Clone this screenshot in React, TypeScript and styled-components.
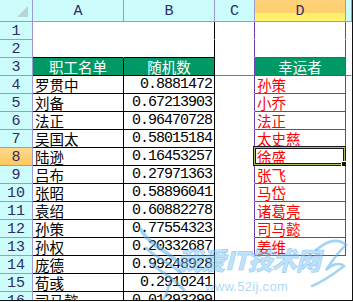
import React from "react";
import styled, { createGlobalStyle, css } from "styled-components";

const Global = createGlobalStyle`
  html, body { margin: 0; padding: 0; background: #fff; }
  #root { width: 353px; height: 302px; }
`;

const CJK = `"Noto Sans CJK SC", "Noto Sans", sans-serif`;
const MONO = `"Liberation Mono", "DejaVu Sans Mono", monospace`;

const Sheet = styled.div`
  position: relative;
  width: 352px;
  height: 300px;
  border-right: 1px solid #111;
  border-bottom: 1px solid #111;
  overflow: hidden;
  display: grid;
  grid-template-columns: 33px 91px 91px 40px 91px 6px;
  grid-template-rows: 22px;
  grid-auto-rows: 18px;
  background: #fff;
`;

const Cell = styled.div<{
  $bg?: string;
  $color?: string;
  $align?: "left" | "right" | "center";
  $r?: string;
  $b?: string;
  $mono?: boolean;
}>`
  position: relative;
  box-sizing: border-box;
  border-right: 1px solid ${(p) => p.$r || "transparent"};
  border-bottom: 1px solid ${(p) => p.$b || "transparent"};
  background: ${(p) => p.$bg || "#fff"};
  color: ${(p) => p.$color || "#000"};
  display: flex;
  align-items: flex-end;
  justify-content: ${(p) =>
    p.$align === "right" ? "flex-end" : p.$align === "center" ? "center" : "flex-start"};
  padding: 0 2px 0 2px;
  white-space: nowrap;
  overflow: visible;
  ${(p) =>
    p.$mono
      ? css`
          font-family: ${MONO};
          font-size: 15px;
          letter-spacing: -1px;
          line-height: 17px;
        `
      : css`
          font-family: ${CJK};
          font-size: 14.5px;
          line-height: 17px;
        `}
`;

const HeadCell = styled.div<{ $sel?: boolean; $row?: boolean }>`
  position: relative;
  box-sizing: border-box;
  border-right: 1px solid #9a9ad0;
  border-bottom: 1px solid #9a9ad0;
  background: ${(p) =>
    p.$sel
      ? p.$row
        ? "linear-gradient(#ffd88c, #ffc75e)"
        : "linear-gradient(#ffd27a 0%, #ffcf6e 62%, #fff06a 63%, #fff26e 100%)"
      : "#ccfcfc"};
  color: #2d2d66;
  font-family: ${MONO};
  font-size: 15px;
  display: flex;
  align-items: center;
  justify-content: center;
  padding-top: 1px;
`;

const Corner = styled(HeadCell)`
  &::after {
    content: "";
    position: absolute;
    right: 4px;
    bottom: 4px;
    width: 0;
    height: 0;
    border-left: 11px solid transparent;
    border-bottom: 11px solid #b8d4d4;
  }
`;

const Selection = styled.div`
  position: absolute;
  left: -2px;
  top: -2px;
  right: -1px;
  bottom: -1px;
  border: 1px solid #1a1a1a;
  box-shadow: inset 0 0 0 1px #a8c464, inset 0 0 0 2px #1a1a1a;
  pointer-events: none;
  &::after {
    content: "";
    position: absolute;
    right: -3px;
    bottom: -3px;
    width: 5px;
    height: 5px;
    background: #111;
    border: 1px solid #fff;
  }
`;

const Watermark = styled.div`
  position: absolute;
  left: 0;
  top: 0;
  width: 353px;
  height: 302px;
  pointer-events: none;
`;

const WmTitle = styled.div`
  position: absolute;
  left: 177px;
  top: 245px;
  font-family: ${CJK};
  font-weight: 900;
  font-style: italic;
  font-size: 25px;
  letter-spacing: -1px;
  color: rgba(125, 198, 245, 0.5);
  -webkit-text-stroke: 0.6px rgba(70, 160, 230, 0.45);
  line-height: 28px;
`;

const WmUrl = styled.div`
  position: absolute;
  left: 205px;
  top: 279px;
  font-family: "Liberation Sans", sans-serif;
  font-size: 13px;
  color: rgba(110, 190, 240, 0.6);
  letter-spacing: 0.3px;
`;

const GREEN = "#009966";
const PURPLE = "#7040a8";
const FREEZE = "#7a7a7a";

const names = ["罗贯中", "刘备", "法正", "吴国太", "陆逊", "吕布", "张昭", "袁绍", "孙策", "孙权", "庞德", "荀彧", "司马懿"];
const nums = ["0.8881472", "0.67213903", "0.96470728", "0.58015184", "0.16453257", "0.27971363", "0.58896041", "0.60882278", "0.77554323", "0.20332687", "0.99248928", "0.2910241", "0.01293299"];
const lucky = ["孙策", "小乔", "法正", "太史慈", "徐盛", "张飞", "马岱", "诸葛亮", "司马懿", "姜维"];

export default function App() {
  const rows: React.ReactNode[] = [];
  for (let r = 1; r <= 16; r++) {
    const sel = r === 8;
    rows.push(
      <HeadCell key={`h${r}`} $row $sel={sel}>
        {r}
      </HeadCell>
    );
    if (r <= 2) {
      const bottom = r === 2 ? "#000" : undefined;
      rows.push(<Cell key={`a${r}`} $b={bottom} />);
      rows.push(<Cell key={`b${r}`} $r="#000" $b={bottom} />);
      rows.push(<Cell key={`c${r}`} $r={PURPLE} />);
      rows.push(<Cell key={`d${r}`} $r={PURPLE} $b={r === 2 ? PURPLE : undefined} />);
      rows.push(<Cell key={`e${r}`} />);
    } else if (r === 3) {
      rows.push(
        <Cell key="a3" $bg={GREEN} $color="#fff" $align="center" $r="#000" $b="#000">
          职工名单
        </Cell>
      );
      rows.push(
        <Cell key="b3" $bg={GREEN} $color="#fff" $align="center" $r="#000" $b="#000">
          随机数
        </Cell>
      );
      rows.push(<Cell key="c3" $r={PURPLE} $b={FREEZE} />);
      rows.push(
        <Cell key="d3" $bg={GREEN} $color="#fff" $align="center" $r={PURPLE} $b={PURPLE}>
          幸运者
        </Cell>
      );
      rows.push(<Cell key="e3" $b={FREEZE} />);
    } else {
      const i = r - 4;
      const l = lucky[i];
      rows.push(
        <Cell key={`a${r}`} $r="#000" $b="#000">
          {names[i]}
        </Cell>
      );
      rows.push(
        <Cell key={`b${r}`} $align="right" $mono $r="#000" $b="#000">
          {nums[i]}
        </Cell>
      );
      rows.push(<Cell key={`c${r}`} $r={l ? PURPLE : undefined} />);
      rows.push(
        <Cell key={`d${r}`} $color="#ff0000" $r={l ? PURPLE : undefined} $b={l ? PURPLE : undefined}>
          {l}
          {sel && <Selection />}
        </Cell>
      );
      rows.push(<Cell key={`e${r}`} />);
    }
  }

  return (
    <>
      <Global />
      <Sheet>
        <Corner />
        <HeadCell>A</HeadCell>
        <HeadCell>B</HeadCell>
        <HeadCell>C</HeadCell>
        <HeadCell $sel>D</HeadCell>
        <HeadCell />
        {rows}
        <Watermark>
          <svg width="353" height="302" viewBox="0 0 353 302" style={{ position: "absolute", left: 0, top: 0 }}>
            <g fill="none" stroke="rgba(90,175,235,0.55)" strokeLinecap="round">
              <path d="M141 230 C150 245, 165 250, 178 262" strokeWidth="4" />
              <path d="M146 248 C156 258, 168 262, 180 272" strokeWidth="3" />
              <path d="M150 262 C160 272, 172 276, 184 290" strokeWidth="3" />
              <path d="M170 282 C168 290, 166 296, 162 302" strokeWidth="2.5" />
              <path d="M316 250 C328 240, 338 238, 346 245 C340 250, 334 258, 326 270 C332 264, 340 262, 344 266 C336 272, 326 280, 312 286" strokeWidth="2.5" />
            </g>
          </svg>
          <WmTitle>我爱IT技术网</WmTitle>
          <WmUrl>www.52ij.com</WmUrl>
        </Watermark>
      </Sheet>
    </>
  );
}
